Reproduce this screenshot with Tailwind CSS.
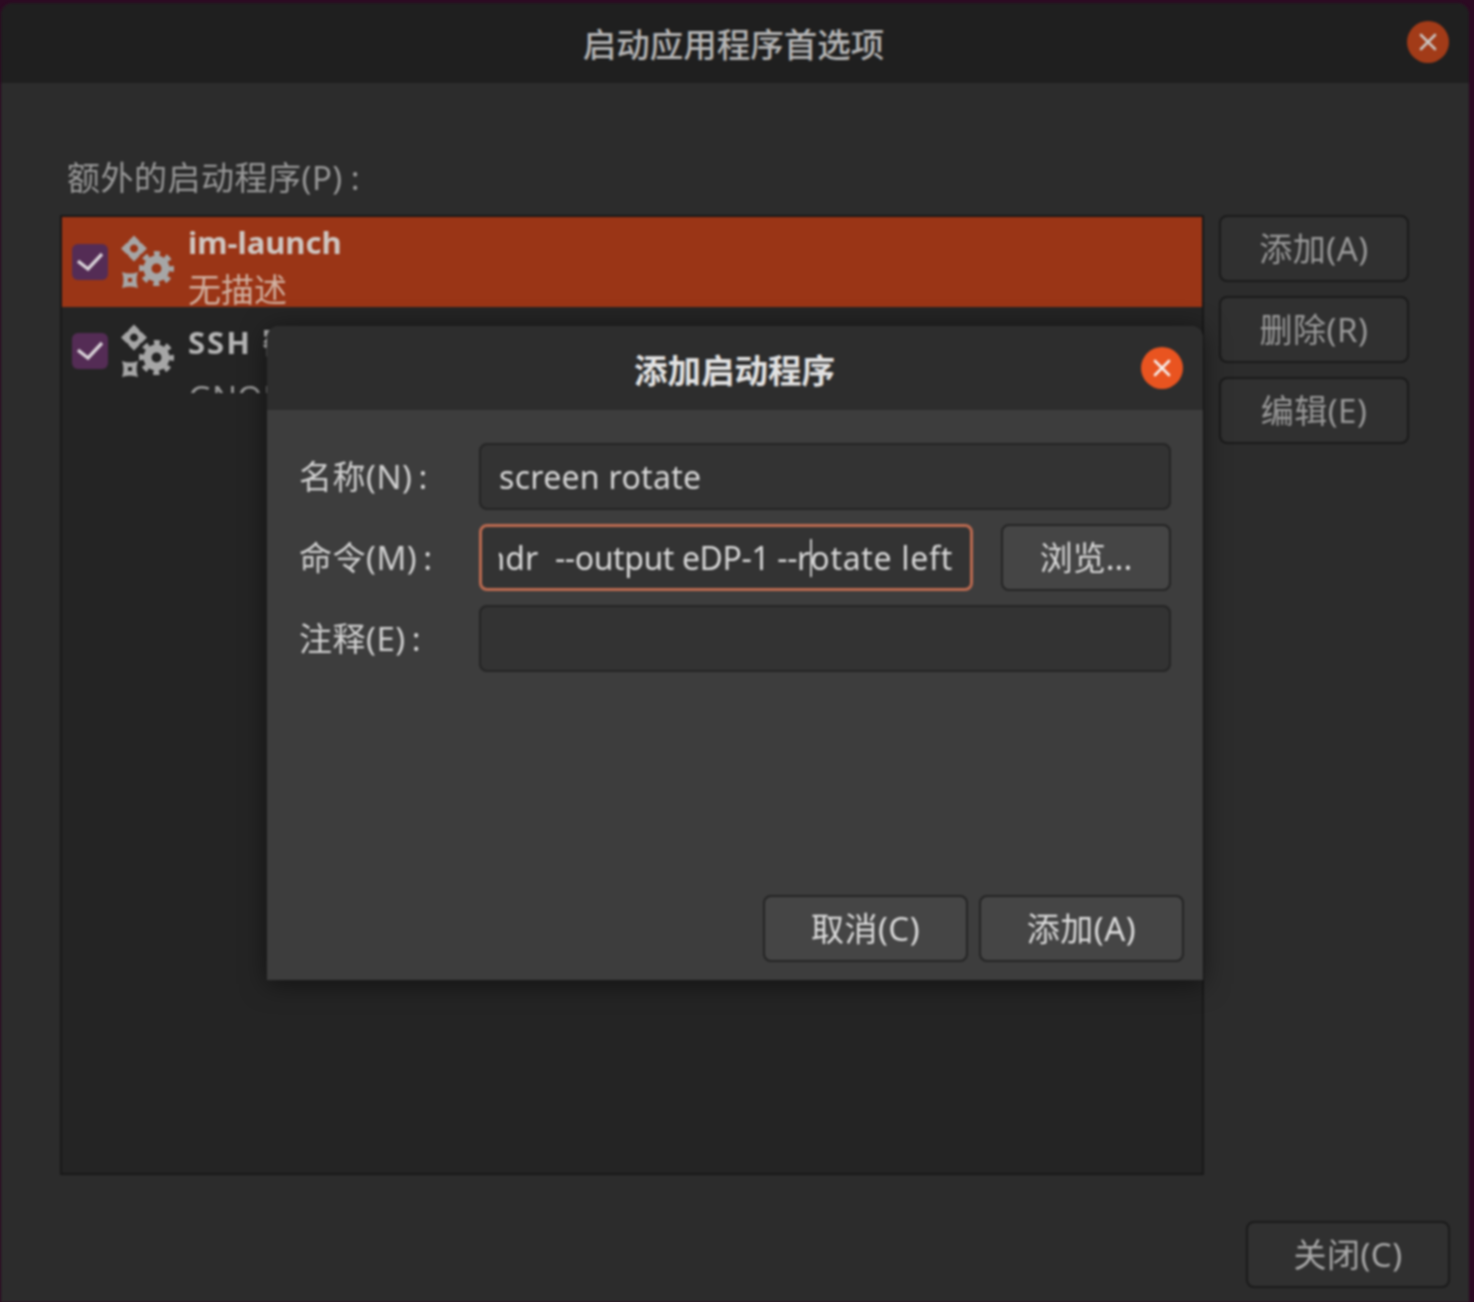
<!DOCTYPE html>
<html lang="zh">
<head>
<meta charset="utf-8">
<script src="https://cdn.jsdelivr.net/npm/@tailwindcss/browser@4"></script>
<title>启动应用程序首选项</title>
</head>
<body class="m-0 bg-[#2c0a22]">
<svg width="0" height="0" class="absolute">
  <defs>
    <g id="gears">
      <path fill-rule="evenodd" d="M14 1.500L19 6.500 20 8.500 22 9.500 27 14.500 22 19.500 20 20.500 19 22.500 14 27.500 9 22.500 8 20.500 6 19.500 1 14.500 6 9.500 8 8.500 9 6.500Z M14 10.500a4 4 0 1 0 .01 0z" fill="#a6a6a6"/>
      <circle cx="36.500" cy="34.500" r="9" fill="none" stroke="#a6a6a6" stroke-width="8"/>
      <circle cx="36.500" cy="34.500" r="15" fill="none" stroke="#a6a6a6" stroke-width="5" stroke-dasharray="6 5.780" stroke-dashoffset="3"/>
      <path fill-rule="evenodd" d="M2 38Q10 41 18 38 15 46 18 54 10 51 2 54 5 46 2 38Z M8 44V48H12V44Z" fill="#a6a6a6"/>
    </g>
  </defs>
</svg>
<div class="w-[1474px] h-[1302px] overflow-hidden pt-[3px] pl-[1px] pr-[5px] blur-[0.8px] font-['Noto_Sans','Noto_Sans_CJK_SC',sans-serif] text-[32px] text-[#a8a8a8]">
  <div class="h-[1299px] flex flex-col bg-[#2c2c2c] rounded-t-[12px] overflow-hidden">
    <header class="h-[80px] shrink-0 bg-[#1f1f1f] flex items-center relative">
      <h1 class="w-full text-center pr-[3px] pt-[2px] text-[33.500px] leading-[40px] font-medium text-[#b4b4b4]">启动应用程序首选项</h1>
      <button class="absolute left-[1406px] top-[18px] w-[42px] h-[42px] rounded-full bg-[#a23b18] flex items-center justify-center">
        <svg width="20" height="20" viewBox="0 0 20 20"><path d="M3 3l14 14M17 3L3 17" stroke="#c9c5c2" stroke-width="2.600" stroke-linecap="round"/></svg>
      </button>
    </header>
    <main class="flex-1 flex flex-col pl-[59px] pr-[19px] pt-[75px]">
      <div class="h-[40px] leading-[40px] pl-[7px] text-[33px] tracking-[0.500px] text-[#989898] mb-[17px]">额外的启动程序(P)<span class="ml-[8px]">:</span></div>
      <div class="flex gap-[15px] items-start">
        <div class="relative w-[1144px] h-[960px] bg-[#242424] border-2 border-[#181818]">
          <div class="h-[90px] bg-[#9a3516] flex items-start overflow-hidden pl-[10px]">
            <span class="mt-[27px] w-[36px] h-[36px] rounded-[6px] bg-[#542c55] flex items-center justify-center shrink-0">
              <svg width="26" height="20" viewBox="0 0 26 20"><path d="M1 9L11 17 25 2" fill="none" stroke="#d8d2d8" stroke-width="3.400"/></svg>
            </span>
            <svg class="mt-[17px] ml-[12px] shrink-0" width="56" height="56" viewBox="0 0 56 56"><use href="#gears"/></svg>
            <div class="ml-[12px] pt-[2px]">
              <div class="h-[48px] leading-[46px] font-bold text-[31px] text-[#cfc6c1]">im-launch</div>
              <div class="h-[46px] leading-[46px] text-[33px] text-[#d0b0a0]">无描述</div>
            </div>
          </div>
          <div class="h-[86px] flex items-start overflow-hidden pl-[10px]">
            <span class="mt-[26px] w-[36px] h-[36px] rounded-[6px] bg-[#542c55] flex items-center justify-center shrink-0">
              <svg width="26" height="20" viewBox="0 0 26 20"><path d="M1 9L11 17 25 2" fill="none" stroke="#d8d2d8" stroke-width="3.400"/></svg>
            </span>
            <svg class="mt-[16px] ml-[12px] shrink-0" width="56" height="56" viewBox="0 0 56 56"><use href="#gears"/></svg>
            <div class="ml-[12px] pt-[12px] whitespace-nowrap">
              <div class="h-[46px] leading-[46px] font-bold text-[31px] text-[#b5b5b5]"><span class="tracking-[2px]">SSH</span> <span class="ml-[2px]">密钥代理</span></div>
              <div class="mt-[10px] h-[46px] leading-[46px] text-[33px] text-[#999]">GNOME Keyring: SSH Agent</div>
            </div>
          </div>
          <section class="absolute left-[205px] top-[109px] w-[936px] h-[654px] flex flex-col bg-[#3d3d3d] rounded-t-[12px] shadow-[0_4px_26px_rgba(0,0,0,0.5)] text-[#dcdcdc] overflow-hidden">
            <header class="h-[84px] shrink-0 bg-[#2d2d2d] flex items-center relative">
              <h2 class="w-full text-center pr-[1px] pt-[3px] text-[33.500px] leading-[40px] font-bold text-[#e2e2e2]">添加启动程序</h2>
              <button class="absolute left-[874px] top-[21px] w-[42px] h-[42px] rounded-full bg-[#e95420] flex items-center justify-center">
                <svg width="20" height="20" viewBox="0 0 20 20"><path d="M3 3l14 14M17 3L3 17" stroke="#f6efec" stroke-width="2.600" stroke-linecap="round"/></svg>
              </button>
            </header>
            <div class="flex-1 flex flex-col pl-[32px] pr-[32px] pt-[33px]">
              <div class="grid grid-cols-[180px_1fr] gap-y-[14px] items-center">
                <label class="text-[33px] tracking-[0.500px] text-[#d0d0d0]">名称(N)<span class="ml-[6px]">:</span></label>
                <div class="h-[67px] rounded-[8px] bg-[#333333] border-2 border-[#242424] flex items-center px-[18px] text-[#d8d8d8] tracking-[0.300px]">screen rotate</div>
                <label class="text-[33px] tracking-[0.500px] text-[#d0d0d0]">命令(M)<span class="ml-[6px]">:</span></label>
                <div class="flex gap-[28px]">
                  <div class="w-[494px] h-[67px] rounded-[8px] bg-[#333333] border-[3px] border-[#bb6a50] px-[17px] flex items-center justify-end overflow-hidden relative">
                    <div class="overflow-hidden flex justify-end w-full">
                      <span class="shrink-0 whitespace-pre text-[#d8d8d8]">xrandr  <span class="tracking-[-0.400px]">--output eDP-1 --</span><span class="tracking-[0.700px]">rotate left</span></span>
                    </div>
                    <span class="absolute left-[328px] top-[12px] w-[2px] h-[38px] bg-[#c8c8c8]"></span>
                  </div>
                  <button class="flex-1 h-[67px] rounded-[8px] bg-[#454545] border-2 border-[#242424] text-[33px] text-[#d8d8d8]">浏览...</button>
                </div>
                <label class="text-[33px] tracking-[0.500px] text-[#d0d0d0]">注释(E)<span class="ml-[6px]">:</span></label>
                <div class="h-[67px] rounded-[8px] bg-[#333333] border-2 border-[#242424]"></div>
              </div>
            </div>
            <div class="flex justify-end gap-[11px] pr-[19px] pb-[18px]">
              <button class="w-[205px] h-[67px] rounded-[8px] bg-[#454545] border-2 border-[#242424] text-[33px] tracking-[0.500px] text-[#dcdcdc]">取消(C)</button>
              <button class="w-[205px] h-[67px] rounded-[8px] bg-[#454545] border-2 border-[#242424] text-[33px] tracking-[0.500px] text-[#dcdcdc]">添加(A)</button>
            </div>
          </section>
        </div>
        <div class="w-[190px] flex flex-col gap-[14px]">
          <button class="h-[67px] rounded-[8px] bg-[#303030] border-2 border-[#1a1a1a] text-[33px] tracking-[0.500px] text-[#999]">添加(A)</button>
          <button class="h-[67px] rounded-[8px] bg-[#303030] border-2 border-[#1a1a1a] text-[33px] tracking-[0.500px] text-[#999]">删除(R)</button>
          <button class="h-[67px] rounded-[8px] bg-[#303030] border-2 border-[#1a1a1a] text-[33px] tracking-[0.500px] text-[#999]">编辑(E)</button>
        </div>
      </div>
      <div class="flex justify-end mt-[46px]">
        <button class="w-[204px] h-[67px] rounded-[8px] bg-[#303030] border-2 border-[#1a1a1a] text-[33px] tracking-[0.500px] text-[#a8a8a8]">关闭(C)</button>
      </div>
    </main>
  </div>
</div>
</body>
</html>
